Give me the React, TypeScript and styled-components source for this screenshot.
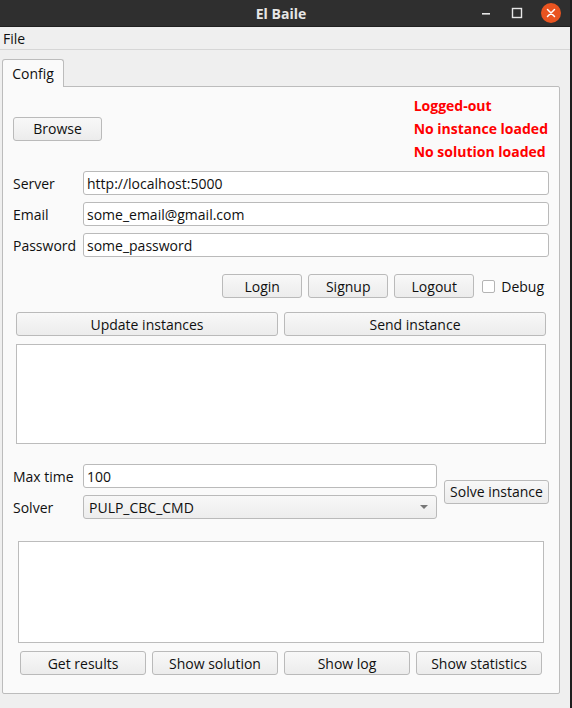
import React from "react";
import styled, { createGlobalStyle } from "styled-components";

const Global = createGlobalStyle`
  html, body { margin: 0; padding: 0; background: #1e1e1e; }
  body { width: 572px; height: 708px; overflow: hidden; }
  * { box-sizing: border-box; }
`;

const FONT = `"Open Sans", "Noto Sans", "DejaVu Sans", sans-serif`;

const Window = styled.div`
  width: 570px;
  height: 708px;
  background: #efefef;
  display: flex;
  flex-direction: column;
  font-family: ${FONT};
  font-size: 14px;
  color: #101010;
`;

const TitleBar = styled.div`
  height: 27px;
  background: #2f2f2f;
  display: flex;
  align-items: center;
  justify-content: center;
  position: relative;
  border-bottom: 1px solid #202020;
`;

const Title = styled.div`
  color: #e6e6e6;
  font-weight: 700;
  font-size: 14px;
  margin-right: 8px;
`;

const WinControls = styled.div`
  position: absolute;
  right: 9px;
  top: 0;
  height: 26px;
  display: flex;
  align-items: center;
  gap: 17px;
`;

const CtlBox = styled.div`
  width: 14px;
  height: 14px;
  display: flex;
  align-items: center;
  justify-content: center;
`;

const CloseCircle = styled.div`
  width: 20px;
  height: 20px;
  border-radius: 50%;
  background: #e95420;
  display: flex;
  align-items: center;
  justify-content: center;
`;

const MenuBar = styled.div`
  height: 23px;
  display: flex;
  align-items: center;
  padding-left: 3px;
  border-bottom: 1px solid #d6d6d6;
`;

const MenuItem = styled.span`
  font-size: 14px;
`;

const TabArea = styled.div`
  padding: 9px 10px 0 2px;
  display: flex;
  flex-direction: column;
`;

const TabRow = styled.div`
  display: flex;
  height: 28px;
  margin-bottom: -1px;
  position: relative;
  z-index: 1;
`;

const Tab = styled.div`
  width: 62px;
  height: 28px;
  border: 1px solid #bcbcbc;
  border-bottom: none;
  border-radius: 3px 3px 0 0;
  background: #fafafa;
  display: flex;
  align-items: center;
  justify-content: center;
  font-size: 14px;
`;

const Panel = styled.div`
  height: 608px;
  border: 1px solid #bcbcbc;
  background: #fafafa;
  border-radius: 0 2px 2px 2px;
  padding: 0 10px;
  display: flex;
  flex-direction: column;
`;

const TopRow = styled.div`
  display: flex;
  justify-content: space-between;
  align-items: center;
  height: 75px;
  padding-top: 8px;
`;

const Status = styled.div`
  display: flex;
  flex-direction: column;
  align-items: flex-start;
  gap: 4px;
  padding-right: 1px;
`;

const StatusText = styled.div`
  color: #ff0000;
  font-weight: 700;
  font-size: 14px;
  line-height: 19px;
`;

const Button = styled.button<{ $w?: number }>`
  font-family: ${FONT};
  font-size: 14px;
  color: #101010;
  height: 24px;
  padding: 0 4px;
  border: 1px solid #bababa;
  border-radius: 3px;
  background: linear-gradient(#f8f8f8, #ececec);
  display: flex;
  align-items: center;
  justify-content: center;
  white-space: nowrap;
  width: ${(p) => (p.$w ? `${p.$w}px` : "auto")};
  flex: ${(p) => (p.$w ? "none" : "1 1 0")};
`;

const Form = styled.div`
  display: grid;
  grid-template-columns: 70px 1fr;
  row-gap: 7px;
  align-items: center;
  margin-top: 9px;
`;

const Label = styled.div`
  font-size: 14px;
`;

const Input = styled.div`
  height: 24px;
  border: 1px solid #bababa;
  border-radius: 3px;
  background: #ffffff;
  display: flex;
  align-items: center;
  padding-left: 3px;
  font-size: 14px;
`;

const AuthRow = styled.div`
  display: flex;
  justify-content: flex-end;
  align-items: center;
  gap: 6px;
  margin-top: 17px;
  padding-right: 5px;
`;

const Check = styled.label`
  display: flex;
  align-items: center;
  gap: 6px;
  margin-left: 2px;
`;

const Box = styled.span`
  width: 13px;
  height: 13px;
  border: 1px solid #b4b4b4;
  border-radius: 2px;
  background: #ffffff;
`;

const Group = styled.div<{ $inset: number; $top: number }>`
  display: flex;
  flex-direction: column;
  margin: ${(p) => p.$top}px ${(p) => p.$inset}px 0;
`;

const ButtonRow = styled.div<{ $top?: number; $pad?: number }>`
  display: flex;
  gap: 6px;
  margin-top: ${(p) => p.$top ?? 0}px;
  padding: 0 ${(p) => p.$pad ?? 0}px;
`;

const ListBox = styled.div<{ $h: number; $top?: number }>`
  height: ${(p) => p.$h}px;
  margin-top: ${(p) => p.$top ?? 0}px;
  border: 1px solid #bcbcbc;
  background: #ffffff;
`;

const SolveSection = styled.div`
  display: flex;
  align-items: center;
  gap: 7px;
  margin-top: 20px;
`;

const SolveForm = styled.div`
  flex: 1;
  display: grid;
  grid-template-columns: 70px 1fr;
  row-gap: 7px;
  align-items: center;
`;

const Combo = styled(Input)`
  background: linear-gradient(#f8f8f8, #ededed);
  justify-content: space-between;
  padding-right: 8px;
  padding-left: 5px;
`;

const Arrow = styled.span`
  width: 0;
  height: 0;
  border-left: 4px solid transparent;
  border-right: 4px solid transparent;
  border-top: 4px solid #777;
`;

export default function App() {
  return (
    <>
      <Global />
      <Window>
        <TitleBar>
          <Title>El Baile</Title>
          <WinControls>
            <CtlBox>
              <svg width="12" height="14" viewBox="0 0 12 14">
                <rect x="2" y="7" width="8" height="1.6" fill="#e6e6e6" />
              </svg>
            </CtlBox>
            <CtlBox>
              <svg width="12" height="12" viewBox="0 0 12 12">
                <rect x="1.5" y="1.5" width="9" height="9" fill="none" stroke="#e6e6e6" strokeWidth="1.4" />
              </svg>
            </CtlBox>
            <CloseCircle>
              <svg width="10" height="10" viewBox="0 0 10 10">
                <path d="M1.5 1.5 L8.5 8.5 M8.5 1.5 L1.5 8.5" stroke="#ffffff" strokeWidth="1.5" strokeLinecap="round" />
              </svg>
            </CloseCircle>
          </WinControls>
        </TitleBar>
        <MenuBar>
          <MenuItem>File</MenuItem>
        </MenuBar>
        <TabArea>
          <TabRow>
            <Tab>Config</Tab>
          </TabRow>
          <Panel>
            <TopRow>
              <Button $w={89}>Browse</Button>
              <Status>
                <StatusText>Logged-out</StatusText>
                <StatusText>No instance loaded</StatusText>
                <StatusText>No solution loaded</StatusText>
              </Status>
            </TopRow>
            <Form>
              <Label>Server</Label>
              <Input>http://localhost:5000</Input>
              <Label>Email</Label>
              <Input>some_email@gmail.com</Input>
              <Label>Password</Label>
              <Input>some_password</Input>
            </Form>
            <AuthRow>
              <Button $w={80}>Login</Button>
              <Button $w={80}>Signup</Button>
              <Button $w={80}>Logout</Button>
              <Check>
                <Box />
                Debug
              </Check>
            </AuthRow>
            <Group $inset={3} $top={14}>
              <ButtonRow>
                <Button>Update instances</Button>
                <Button>Send instance</Button>
              </ButtonRow>
              <ListBox $h={100} $top={8} />
            </Group>
            <SolveSection>
              <SolveForm>
                <Label>Max time</Label>
                <Input>100</Input>
                <Label>Solver</Label>
                <Combo>
                  PULP_CBC_CMD
                  <Arrow />
                </Combo>
              </SolveForm>
              <Button $w={105}>Solve instance</Button>
            </SolveSection>
            <Group $inset={5} $top={22}>
              <ListBox $h={102} />
              <ButtonRow $top={8} $pad={2}>
                <Button>Get results</Button>
                <Button>Show solution</Button>
                <Button>Show log</Button>
                <Button>Show statistics</Button>
              </ButtonRow>
            </Group>
          </Panel>
        </TabArea>
      </Window>
    </>
  );
}
